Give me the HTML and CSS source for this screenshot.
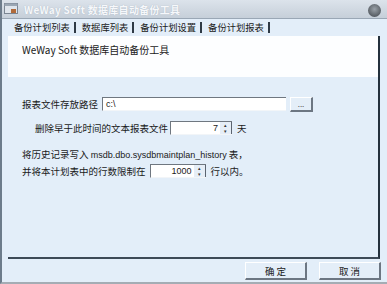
FILE: index.html
```html
<!DOCTYPE html>
<html>
<head>
    <title>WeWay Soft 数据库自动备份工具</title>
    <link rel="stylesheet" href="styles.css">
</head>
<body>
    <div class="window">
        <!-- Title bar -->
        <div class="titlebar">
            <svg class="app-icon" width="14" height="12" viewBox="0 0 14 12">
                <rect x="0.5" y="0.5" width="13" height="10" fill="#dfe5ec" stroke="#7a8592"/>
                <rect x="0.5" y="0.5" width="13" height="2.5" fill="#9aa6b3"/>
                <rect x="7" y="6" width="5" height="4" fill="#b06a3a"/>
            </svg>
            <span class="title">WeWay Soft 数据库自动备份工具</span>
            <div class="close-btn"></div>
        </div>

        <div class="main">
            <!-- Tabs -->
            <div class="tabs">
                <span class="tab">备份计划列表</span>
                <span class="tab">数据库列表</span>
                <span class="tab">备份计划设置</span>
                <span class="tab active">备份计划报表</span>
            </div>

            <div class="panel">
                <div class="intro">WeWay Soft 数据库自动备份工具</div>

                <div class="form">
                    <div class="row">
                        <span class="label">报表文件存放路径</span>
                        <div class="textbox path">c:\</div>
                        <div class="btn small">...</div>
                    </div>
                    <div class="row indent">
                        <span class="label">删除早于此时间的文本报表文件</span>
                        <div class="spinner days">
                            <div class="value">7</div>
                            <div class="arrows"><span>▴</span><span>▾</span></div>
                        </div>
                        <span class="unit">天</span>
                    </div>
                    <div class="row note">
                        <span class="label">将历史记录写入 <span class="latin">msdb.dbo.sysdbmaintplan_history</span> 表，</span>
                    </div>
                    <div class="row tight">
                        <span class="label">并将本计划表中的行数限制在</span>
                        <div class="spinner rows">
                            <div class="value">1000</div>
                            <div class="arrows"><span>▴</span><span>▾</span></div>
                        </div>
                        <span class="unit">行以内。</span>
                    </div>
                </div>
            </div>

            <!-- Dialog buttons -->
            <div class="footer">
                <div class="btn action">确 定</div>
                <div class="btn action">取 消</div>
            </div>
        </div>
    </div>
</body>
</html>
```

FILE: styles.css
```css
/* Page */
body {
    margin: 0;
    background-color: #e3eef9;
    font-family: "Noto Sans CJK SC", "DejaVu Sans", sans-serif;
    font-size: 9.5px;
    color: #1a1a1a;
}

.window {
    width: 387px;
    height: 284px;
    display: flex;
    flex-direction: column;
    box-sizing: border-box;
    border-left: 2px solid #6d7c8b;
    border-bottom: 2px solid #a4acb4;
}

/* Title bar */
.titlebar {
    height: 18px;
    display: flex;
    align-items: center;
    padding: 0 6px 0 2px;
    background: linear-gradient(#dce3eb, #c6cfd9);
    border-bottom: 1px solid #9aa7b5;
}

.app-icon {
    margin-right: 6px;
}

.title {
    flex: 1;
    color: #f6f8fb;
    font-size: 10px;
    font-weight: bold;
    letter-spacing: 0.3px;
    text-shadow: 0 0 1px #a3aebb;
}

.close-btn {
    width: 13px;
    height: 13px;
    margin-top: 2px;
    border-radius: 50%;
    background: radial-gradient(circle at 50% 40%, #9aa1a8, #3c4248);
}

/* Main area */
.main {
    flex: 1;
    display: flex;
    flex-direction: column;
    padding-left: 6px;
}

.tabs {
    height: 17px;
    display: flex;
    align-items: center;
    padding-left: 6px;
    font-size: 9.3px;
}

.tab {
    padding-right: 4px;
    margin-right: 6px;
    border-right: 2px solid #2f3a45;
    line-height: 11px;
}

/* Panel with white header */
.panel {
    height: 221px;
    margin-right: 7px;
    border-right: 2px solid #24313d;
    border-bottom: 2px solid #3d4a57;
}

.intro {
    height: 41px;
    background-color: #fdfeff;
    padding: 6px 0 0 14px;
    box-sizing: border-box;
    font-size: 10px;
}

.form {
    padding: 19px 0 0 14px;
}

.row {
    display: flex;
    align-items: center;
    height: 16px;
    margin-bottom: 8px;
}

.row.indent {
    padding-left: 13px;
    margin-bottom: 10px;
}

.row.note {
    margin-bottom: 1px;
}

.label {
    margin-right: 4px;
}

.latin {
    font-family: "Liberation Sans", sans-serif;
    font-size: 9px;
}

.textbox,
.spinner {
    height: 14px;
    background-color: #ffffff;
    border-top: 1px solid #6f7780;
    border-left: 1px solid #6f7780;
    border-bottom: 1px solid #f2f5f8;
    box-sizing: border-box;
    font-family: "Liberation Sans", sans-serif;
    font-size: 9px;
    line-height: 13px;
}

.textbox.path {
    width: 184px;
    padding-left: 3px;
}

.spinner {
    display: flex;
}

.spinner.days {
    width: 62px;
    margin-left: -2px;
}

.spinner.rows {
    width: 56px;
    margin-left: 0;
}

.spinner .value {
    flex: 1;
    text-align: right;
    padding-right: 2px;
}

.arrows {
    width: 11px;
    display: flex;
    flex-direction: column;
    background-color: #e6eef7;
    border-right: 1px solid #5b6470;
    font-size: 5px;
    line-height: 6px;
    text-align: center;
    color: #333;
}

.unit {
    margin-left: 5px;
}

/* Buttons */
.btn {
    display: flex;
    align-items: center;
    justify-content: center;
    box-sizing: border-box;
    background-color: #e4eef8;
    border-top: 1px solid #ffffff;
    border-left: 1px solid #ffffff;
    border-right: 2px solid #6c7682;
    border-bottom: 2px solid #6c7682;
}

.btn.small {
    width: 23px;
    height: 15px;
    margin-left: 4px;
    font-size: 8px;
    color: #555;
}

.footer {
    display: flex;
    justify-content: flex-end;
    gap: 12px;
    padding: 3px 6px 0 0;
}

.btn.action {
    width: 62px;
    height: 18px;
    font-size: 9.5px;
}
```
